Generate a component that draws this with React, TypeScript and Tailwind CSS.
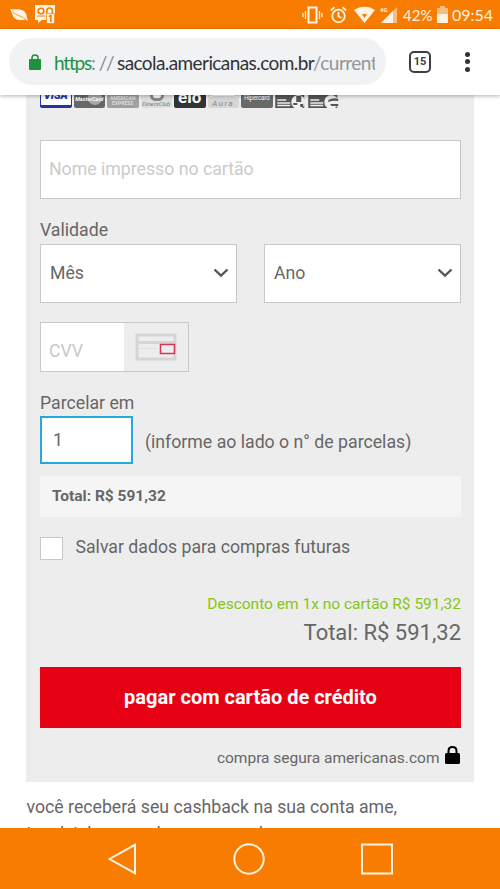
import React from 'react';

interface SelectFieldProps {
  label: string;
}

const SelectField: React.FC<SelectFieldProps> = ({ label }) => (
  <button className="flex h-[59px] w-[197px] items-center justify-between border border-[#c8c8c8] bg-white pr-[7px] pb-px pl-[9px] text-[17.7px] text-[#666]">
    <span className="leading-[20px]">{label}</span>
    <svg className="h-[10px] w-[16px]" viewBox="0 0 16 10" fill="none" stroke="#555" strokeWidth="2.4">
      <path d="M1.5 1.5 8 7.7l6.5-6.2" />
    </svg>
  </button>
);

const StatusBar = () => (
  <header className="flex h-[29px] shrink-0 items-center bg-[#f77c00] pr-[7px] pl-[10px] text-[#fff4e3]">
    {/* Notifications */}
    <svg className="h-[14px] w-[19px]" viewBox="0 0 19 14">
      <path fill="#fff4e3" d="M0 1c5 .5 11-.5 14.500 2.500C17 6 16.500 9 18 13l-2.500-1.500C11 13 3 12 2.500 6.500Z" />
      <path fill="none" stroke="#f77c00" strokeWidth=".7" d="M2.500 4C7 8 11 7.500 16 11.500" />
    </svg>
    <svg className="ml-[6px] h-[19px] w-[20px]" viewBox="0 0 20 19">
      <path fill="#fff4e3" d="M0 0h20v13h-8v2H7l-4 3v-3H0z" />
      <circle cx="6" cy="6" r="2.800" fill="none" stroke="#f77c00" strokeWidth="1.600" />
      <path fill="none" stroke="#f77c00" strokeWidth="1.600" d="M11.800 8V6c0-4 5.600-4 5.600 0v2" />
      <path stroke="#f77c00" fill="none" d="M2 11h8.500" />
      <path fill="#fff4e3" stroke="#f77c00" strokeWidth=".7" d="M11.500 8.500h8v10h-8z" />
      <path stroke="#f77c00" strokeWidth="1.600" fill="none" d="m13.800 11.500 2-1V17" />
    </svg>
    {/* System state */}
    <svg className="ml-auto h-[18px] w-[21px]" viewBox="0 0 21 18" fill="none" stroke="#fff4e3">
      <path strokeWidth="2" d="M6.500 1.500h8v15h-8z" />
      <path strokeWidth="1.300" d="M3.500 5v8M1 7v4M17.500 5v8M20 7v4" />
    </svg>
    <svg className="ml-[7px] h-[18px] w-[17px]" viewBox="0 0 17 18" fill="none" stroke="#fff4e3" strokeWidth="1.8">
      <circle cx="8.500" cy="10" r="6.300" />
      <path d="M8.500 6v4.500l3 1.500M.8 4.500 4.500 1.300M12.500 1.300l3.700 3.200" />
    </svg>
    <svg className="ml-[7px] h-[17px] w-[21px]" viewBox="0 0 21 17">
      <path fill="#fff4e3" d="M0 4C6-.5 15-.5 21 4L10.500 17Z" />
      <path fill="#f77c00" d="M8 8.500c1.500-1 3.500-1 5 0L10.500 12z" />
    </svg>
    <div className="relative ml-[5px] h-[18px] w-[18px]">
      <svg className="h-[18px] w-[18px]" viewBox="0 0 18 18">
        <path fill="#fbbd7e" d="M17 1v16H1z" />
        <path fill="#fff4e3" d="M13 5v12H1z" />
      </svg>
      <span className="absolute top-[1px] left-0 text-[6px] leading-[6px] font-bold">4G</span>
    </div>
    <span className="ml-[5px] w-[29px] font-['Lato'] text-[15px] leading-[18px] whitespace-nowrap">42%</span>
    <svg className="ml-[5px] h-[17px] w-[11px]" viewBox="0 0 11 17">
      <path fill="#fbbd7e" d="M3 0h5v2h3v15H0V2h3z" />
      <path fill="#fff4e3" d="M0 8h11v9H0z" />
    </svg>
    <span className="ml-[4px] w-[41px] font-['Lato'] text-[16px] leading-[18px] whitespace-nowrap">09:54</span>
  </header>
);

const BrowserBar = () => (
  <div className="relative z-10 flex h-[66px] shrink-0 items-center bg-white pr-[28px] pb-px pl-[9px] shadow-[0_1px_4px_rgba(0,0,0,0.3)]">
    <div className="flex h-[47px] w-[377px] items-center rounded-full bg-[#f0f2f4] pl-[20px]">
      <svg className="h-[16px] w-[12px]" viewBox="0 0 12 16">
        <path fill="#1e9141" d="M1 5h10q1 0 1 1v9q0 1-1 1H1q-1 0-1-1V6q0-1 1-1Z" />
        <path fill="none" stroke="#1e9141" strokeWidth="1.5" d="M3 6V3.500C3 0 9 0 9 3.500V6" />
      </svg>
      <div className="ml-[13px] flex w-[321px] overflow-hidden pt-[2px] font-['Lato'] text-[19px] leading-[24px] whitespace-nowrap">
        <span className="w-[37px] tracking-[-1.2px] text-[#1e9141]">https</span>
        <span className="w-[26px] tracking-[3px] text-[#858b90]">://</span>
        <span className="w-[196px] tracking-[-0.58px] text-[#303236]">sacola.americanas.com.br</span>
        <span className="w-[62px] tracking-[-0.5px] text-[#92969a]">/current</span>
      </div>
    </div>
    <div className="ml-[23px] flex h-[22px] w-[22px] items-center justify-center rounded-[5px] border-2 border-[#3c4043] text-[11px] leading-none font-bold text-[#3c4043]">
      15
    </div>
    <div className="ml-auto flex w-[10px] flex-col items-center gap-[2.5px]">
      <span className="h-[5px] w-[5px] rounded-full bg-[#303236]" />
      <span className="h-[5px] w-[5px] rounded-full bg-[#303236]" />
      <span className="h-[5px] w-[5px] rounded-full bg-[#303236]" />
    </div>
  </div>
);

const CardBrands = () => (
  <div className="flex h-[12.5px] items-end gap-[2px] text-center text-white">
    <div className="flex h-[20px] w-[31.5px] flex-col rounded-b-[2px] border-x border-b-[3px] border-[#2532a2] bg-white">
      <span className="pt-[1px] text-[11px] leading-[13px] font-black text-[#2532a2] italic">VISA</span>
    </div>
    <div className="relative h-[20px] w-[31.5px] overflow-hidden rounded-b-[2px] bg-[#676767] text-[5.5px] leading-[23px] font-bold italic">
      <span className="absolute top-[3px] right-[3px] h-[14px] w-[14px] rounded-full bg-[#aaa]" />
      <span className="relative">MasterCard</span>
    </div>
    <div className="h-[20px] w-[31.5px] rounded-b-[2px] bg-[#a0a0a0] pt-[8px] text-[5px] leading-[5px] font-bold text-[#ddd]">
      AMERICAN EXPRESS
    </div>
    <div className="relative h-[20px] w-[31.5px] rounded-b-[2px] bg-[#dedede] pt-[13px] text-[6px] leading-[6px] text-[#777] italic">
      <span className="absolute top-[2px] left-[9px] h-[11px] w-[14px] rounded-full border-[3px] border-[#888] bg-white" />
      <span className="relative">DinersClub</span>
    </div>
    <div className="h-[20px] w-[31.5px] rounded-b-[2px] bg-[#333] text-[17px] leading-[18px] font-bold">elo</div>
    <div className="h-[20px] w-[31.5px] rounded-b-[2px] bg-[#d5d5d5] pt-[7px]">
      <div className="h-[6px] rounded-t-full border-t border-white" />
      <span className="block text-[8px] leading-[6px] tracking-[1.5px] text-[#888] italic">Aura</span>
    </div>
    <div className="h-[20px] w-[31.5px] rounded-b-[2px] bg-[#686868] text-[6.5px] leading-[20px] tracking-[-0.3px]">Hipercard</div>
    {[0, 1].map((card) => (
      <svg key={card} className="h-[20px] w-[31.5px]" viewBox="0 0 31 20">
        <path fill="#555" d="M0 0h29v20H0z" />
        <path stroke="#eee" strokeWidth="1.5" d="M2 12h9M2 15h13M2 17.500h13" />
        <circle cx="23" cy="14" r="7" fill="#eee" />
        {card === 0 ? (
          <path fill="#555" d="M21 8h5v6h-5zM18 15h4v2h-4zM25 16h3v3h-3z" />
        ) : (
          <path fill="#555" d="M20 12q5-3 10-1v2q-5-1-10 1zM22 16h8v2h-7z" />
        )}
      </svg>
    ))}
  </div>
);

const CheckoutForm = () => (
  <section className="ml-[26px] h-[687px] w-[448px] shrink-0 bg-[#ededed] pr-[13px] pl-[14px] text-[#666]">
    <CardBrands />
    <input
      className="mt-[32.5px] block h-[59px] w-full border border-[#c8c8c8] bg-white px-[8px] pb-[2px] text-[17.7px] outline-none placeholder:text-[#cbcbcb]"
      placeholder="Nome impresso no cartão"
    />
    {/* Expiry date */}
    <label className="mt-[19px] block text-[17.7px] leading-[24px]">Validade</label>
    <div className="mt-[2px] flex justify-between">
      <SelectField label="Mês" />
      <SelectField label="Ano" />
    </div>
    {/* Security code */}
    <div className="mt-[19px] flex h-[50px] w-[149px] border border-[#c8c8c8]">
      <input
        className="w-[83px] bg-white pt-[8px] pl-[8px] text-[17.7px] outline-none placeholder:text-[#c8c8c8]"
        placeholder="CVV"
      />
      <svg className="mt-[10px] ml-[11px] h-[28px] w-[42px]" viewBox="0 0 42 28" fill="none">
        <path stroke="#d5d5d5" strokeWidth="3" d="M2 2h38v24H2zM2 9.500h38" />
        <path stroke="#ddd" d="M5 15.500h16" />
        <path stroke="#d33659" strokeWidth="1.5" d="M25.500 11.500h14v9h-14z" />
      </svg>
    </div>
    {/* Installments */}
    <label className="mt-[19px] block text-[17.7px] leading-[24px]">Parcelar em</label>
    <div className="mt-[1px] flex items-center">
      <input className="h-[48px] w-[93px] border-2 border-[#27aadb] bg-white pl-[11px] text-[17.7px] outline-none" defaultValue="1" />
      <span className="ml-[12px] pt-[3px] text-[17.7px] leading-[24px] whitespace-nowrap">(informe ao lado o n° de parcelas)</span>
    </div>
    <div className="mt-[12px] h-[41px] bg-[#f5f5f5] pl-[12px] text-[15.5px] leading-[41px] font-bold">Total: R$ 591,32</div>
    <label className="mt-[18px] flex h-[24px]">
      <input type="checkbox" className="mt-[2px] h-[23px] w-[23px] appearance-none border border-[#c8c8c8] bg-white" />
      <span className="ml-[12.5px] text-[17.7px] leading-[24px]">Salvar dados para compras futuras</span>
    </label>
    {/* Summary */}
    <div className="mt-[33px] text-right text-[15.5px] leading-[24px] text-[#84c713]">Desconto em 1x no cartão R$ 591,32</div>
    <div className="mt-px text-right text-[22px] leading-[32px]">Total: R$ 591,32</div>
    <button className="mt-[18px] block h-[61px] w-full bg-[#e60014] pb-px text-[20px] font-bold text-white">pagar com cartão de crédito</button>
    <div className="mt-[18px] flex items-center justify-end">
      <span className="text-[15.5px] leading-[24px]">compra segura americanas.com</span>
      <svg className="mr-[1.5px] mb-[6px] ml-[5px] h-[18px] w-[15px]" viewBox="0 0 15 18">
        <rect y="7" width="15" height="11" rx="1.5" />
        <path d="M3.500 8V5C3.500-.2 11.500-.2 11.500 5v3" fill="none" stroke="#000" strokeWidth="2" />
      </svg>
    </div>
  </section>
);

const NavigationBar = () => (
  <nav className="flex h-[61px] shrink-0 items-center bg-[#f77c00] pt-px pl-[108px]">
    <svg className="h-[32px] w-[29px]" viewBox="0 0 29 32" fill="none" stroke="#fff4e3" strokeWidth="2">
      <path d="M1.500 16 27 1.800v28.400Z" />
    </svg>
    <svg className="ml-[96px] h-[32px] w-[32px]" viewBox="0 0 32 32" fill="none" stroke="#fff4e3" strokeWidth="2">
      <circle cx="16" cy="16" r="14.700" />
    </svg>
    <svg className="ml-[96px] h-[32px] w-[32px]" viewBox="0 0 32 32" fill="none" stroke="#fff4e3" strokeWidth="2">
      <path d="M1 1.500h30v29H1z" />
    </svg>
  </nav>
);

export default function App() {
  return (
    <div className="flex h-[889px] w-[500px] flex-col overflow-hidden bg-white font-['Roboto',sans-serif]">
      <StatusBar />
      <BrowserBar />
      <main className="h-[733px] shrink-0 overflow-hidden">
        <CheckoutForm />
        <p className="pt-[12px] pl-[26.5px] text-[17.7px] leading-[26.5px] text-[#666]">
          você receberá seu cashback na sua conta ame,
          <br />
          igualzinho quando compra pelo app
        </p>
      </main>
      <NavigationBar />
    </div>
  );
}
